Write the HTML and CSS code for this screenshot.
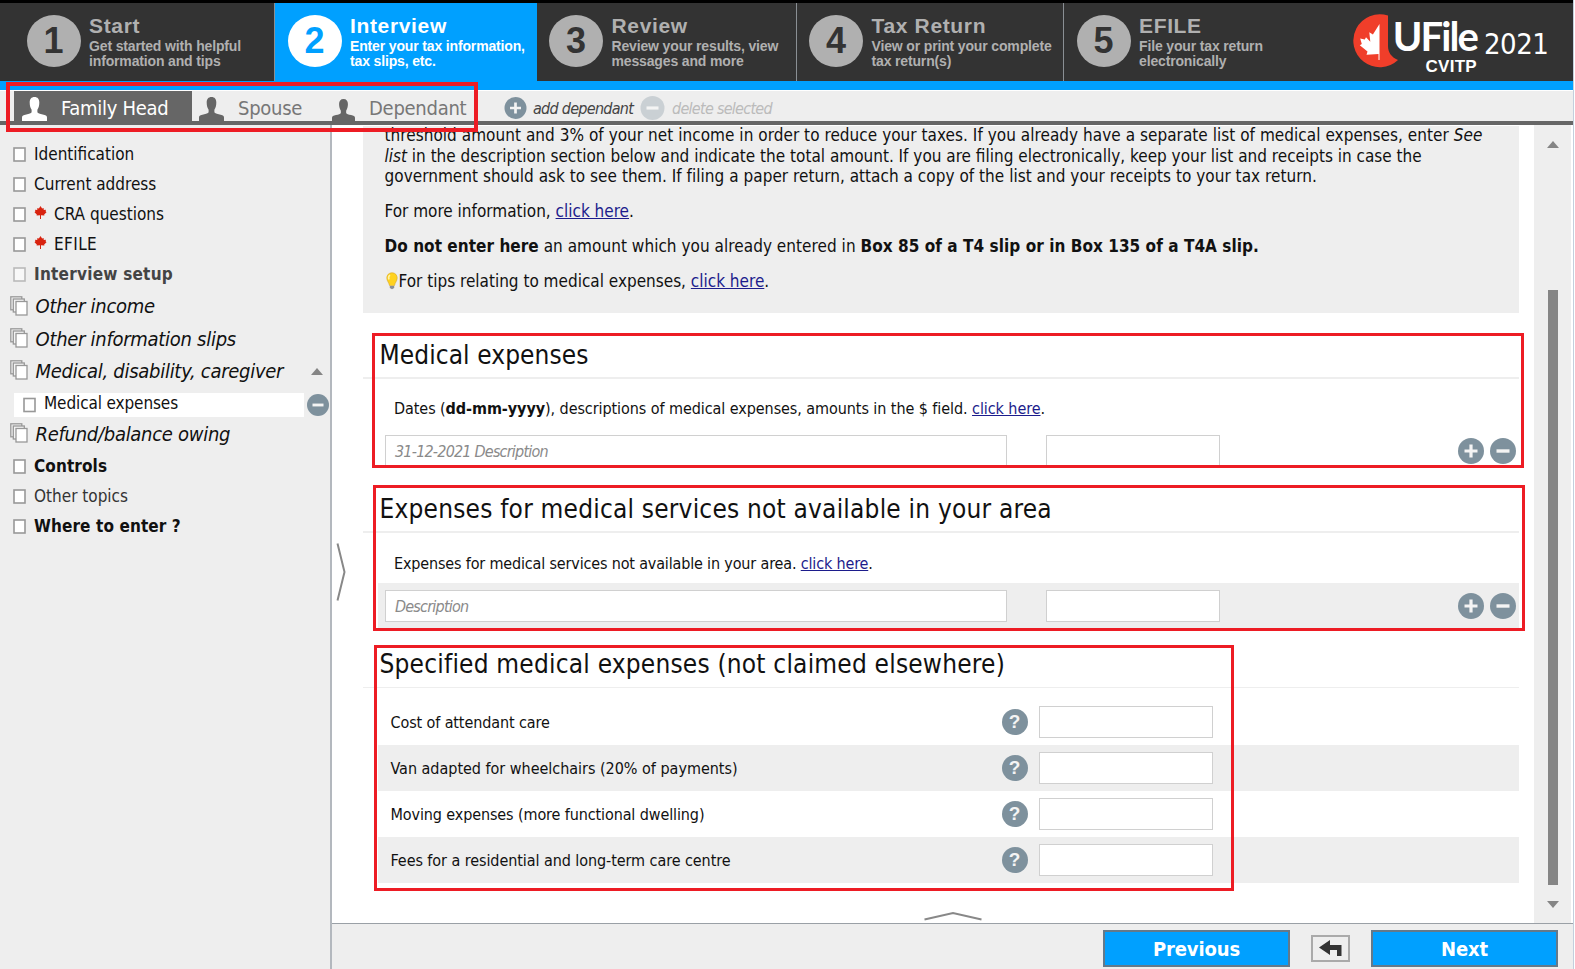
FILE: index.html
```html
<!DOCTYPE html>
<html lang="en">
<head>
<meta charset="utf-8">
<title>UFile 2021</title>
<link rel="stylesheet" href="styles.css">
</head>
<body>
<svg width="0" height="0" class="defs">
  <defs>
    <symbol id="plus" viewBox="0 0 26 26"><circle cx="13" cy="13" r="13"/><path d="M13 6.500v13M6.500 13h13" stroke="#f4f4f4" stroke-width="3.200" fill="none"/></symbol>
    <symbol id="minus" viewBox="0 0 26 26"><circle cx="13" cy="13" r="13"/><path d="M6.500 13h13" stroke="#f4f4f4" stroke-width="3.400" fill="none"/></symbol>
    <symbol id="person" viewBox="0 0 26 24" preserveAspectRatio="none"><path d="M13 0c3.300 0 5 2.200 5 5.500 0 3.200-.8 5.500-2 7.200v2.600c.6 1.200 2.500 1.700 5.500 2.200 3 .5 4.500 1.200 4.500 3V24H0v-3.500c0-1.800 1.500-2.500 4.500-3 3-.5 4.900-1 5.500-2.200v-2.600C8.800 11 8 8.700 8 5.500 8 2.200 9.700 0 13 0z"/></symbol>
    <symbol id="leaf" viewBox="0 0 12 13"><path d="M6 0l1.600 2.400 1.500-.5.200 2.100 2.200-.2-.4 1.500.9.900-2.300 2.200.2 1.100-3.400-.3V13h-1V9.200l-3.400.3.200-1.100L0 6.200l.9-.9L.5 3.800l2.200.2.200-2.100 1.500.5z"/></symbol>
    <symbol id="page" viewBox="0 0 13 15"><rect x="1" y="1" width="11" height="13" fill="#fff" stroke="#989898" stroke-width="1.600"/></symbol>
    <symbol id="pages" viewBox="0 0 18 20"><g fill="#f4f4f4" stroke="#989898" stroke-width="1.300"><rect x=".8" y=".8" width="11" height="13"/><rect x="3.300" y="3" width="11" height="13"/><rect x="6" y="5.500" width="11" height="13.500" fill="#fff"/></g></symbol>
  </defs>
</svg>
<div class="window">
  <header class="steps">
    <div class="step s1"><b class="num">1</b><div class="cap"><h2>Start</h2><p>Get started with helpful<br>information and tips</p></div></div>
    <div class="step s2 on"><b class="num">2</b><div class="cap"><h2>Interview</h2><p>Enter your tax information,<br>tax slips, etc.</p></div></div>
    <div class="step s3"><b class="num">3</b><div class="cap"><h2>Review</h2><p>Review your results, view<br>messages and more</p></div></div>
    <div class="step s4"><b class="num">4</b><div class="cap"><h2>Tax Return</h2><p>View or print your complete<br>tax return(s)</p></div></div>
    <div class="step s5"><b class="num">5</b><div class="cap"><h2>EFILE</h2><p>File your tax return<br>electronically</p></div></div>
    <div class="brand">
      <svg class="mark" width="46" height="54" viewBox="0 0 46 54"><path d="M35 1.500A26.500 26.500 0 1 0 45 46C38 43 35 38 35 32z" fill="#f03e2a"/><path d="M26.500 10v36h-1v-6l-12 .8 1-3.300-7.700-6.300 2-1.200-1.600-5.400 4.600.9 1.200-2.200 4.300 4.400-1-9.500 3.600 2.300z" fill="#fff"/></svg>
      <div class="wordmark"><span class="uf">UFile</span><span class="cv">CVITP</span></div>
      <span class="year">2021</span>
    </div>
  </header>
  <nav class="people">
    <div class="tab active"><svg width="25" height="24"><use href="#person"/></svg><span>Family Head</span></div>
    <div class="tab t2"><svg width="25" height="24"><use href="#person"/></svg><span>Spouse</span></div>
    <div class="tab t3"><svg width="23" height="22"><use href="#person"/></svg><span>Dependant</span></div>
    <div class="act add"><svg width="23" height="22"><use href="#plus"/></svg><i>add dependant</i></div>
    <div class="act del"><svg width="25" height="24"><use href="#minus"/></svg><i>delete selected</i></div>
  </nav>
  <div class="body">
    <aside class="side">
      <div class="it"><svg><use href="#page"/></svg><span>Identification</span></div>
      <div class="it"><svg><use href="#page"/></svg><span>Current address</span></div>
      <div class="it"><svg><use href="#page"/></svg><svg class="lf"><use href="#leaf"/></svg><span>CRA questions</span></div>
      <div class="it"><svg><use href="#page"/></svg><svg class="lf"><use href="#leaf"/></svg><span class="efile">EFILE</span></div>
      <div class="it bold dim"><svg><use href="#page"/></svg><span>Interview setup</span></div>
      <div class="grp g1"><svg><use href="#pages"/></svg><span>Other income</span></div>
      <div class="grp"><svg><use href="#pages"/></svg><span>Other information slips</span></div>
      <div class="grp"><svg><use href="#pages"/></svg><span>Medical, disability, caregiver</span><b class="up"></b></div>
      <div class="subrow"><div class="sub"><svg><use href="#page"/></svg><span>Medical expenses</span></div><svg class="mn"><use href="#minus"/></svg></div>
      <div class="grp"><svg><use href="#pages"/></svg><span>Refund/balance owing</span></div>
      <div class="it bold"><svg><use href="#page"/></svg><span>Controls</span></div>
      <div class="it soft"><svg><use href="#page"/></svg><span>Other topics</span></div>
      <div class="it bold"><svg><use href="#page"/></svg><span>Where to enter ?</span></div>
    </aside>
    <div class="gutter"><svg width="10" height="60" viewBox="0 0 10 60"><path d="M1.500 1.500l7 28.500-7 28.500" fill="none" stroke="#888" stroke-width="2"/></svg></div>
    <div class="right">
      <div class="view">
        <main class="main">
          <div class="intro">
            <p class="first"><span class="l1">threshold amount and 3% of your net income in order to reduce your taxes. If you already have a separate list of medical expenses, enter <i>See</i></span><br><span><i>list</i> in the description section below and indicate the total amount. If you are filing electronically, keep your list and receipts in case the</span><br><span class="l3">government should ask to see them. If filing a paper return, attach a copy of the list and your receipts to your tax return.</span></p>
            <p><span>For more information, <a>click here</a>.</span></p>
            <p><span class="l1"><b>Do not enter here</b> an amount which you already entered in <b>Box 85 of a T4 slip or in Box 135 of a T4A slip.</b></span></p>
            <p><svg class="bulb" width="14" height="18" viewBox="0 0 14 18"><path d="M7 .8c3.400 0 5.200 2.500 5.200 5.200 0 3-2.200 4.500-2.700 7.500h-5C4 10.500 1.800 9 1.800 6 1.800 3.300 3.600.8 7 .8z" fill="#ffd21f" stroke="#d6a62e" stroke-width=".6"/><path d="M5 3.200C3.500 4.200 3.400 6 4 7.500" stroke="#fff3a8" stroke-width="1.600" fill="none"/><path d="M4.800 14h4.400v2L7 17.200 4.800 16z" fill="#8a8f96"/></svg><span>For tips relating to medical expenses, <a>click here</a>.</span></p>
          </div>
          <section class="sec">
            <h1 class="h-med">Medical expenses</h1>
            <p class="lead lead-dates">Dates (<b>dd-mm-yyyy</b>), descriptions of medical expenses, amounts in the $ field. <a>click here</a>.</p>
            <div class="entry"><div class="field wide"><i>31-12-2021 Description</i></div><div class="field"></div><svg class="pm p"><use href="#plus"/></svg><svg class="pm"><use href="#minus"/></svg></div>
          </section>
          <section class="sec">
            <h1>Expenses for medical services not available in your area</h1>
            <p class="lead">Expenses for medical services not available in your area. <a>click here</a>.</p>
            <div class="entry shade"><div class="field wide"><i>Description</i></div><div class="field"></div><svg class="pm p"><use href="#plus"/></svg><svg class="pm"><use href="#minus"/></svg></div>
          </section>
          <section class="sec last">
            <h1>Specified medical expenses (not claimed elsewhere)</h1>
            <div class="q"><label>Cost of attendant care</label><b class="help">?</b><div class="field"></div></div>
            <div class="q shade"><label class="van">Van adapted for wheelchairs (20% of payments)</label><b class="help">?</b><div class="field"></div></div>
            <div class="q"><label>Moving expenses (more functional dwelling)</label><b class="help">?</b><div class="field"></div></div>
            <div class="q shade"><label class="fees">Fees for a residential and long-term care centre</label><b class="help">?</b><div class="field"></div></div>
          </section>
          <svg class="peak" width="60" height="10" viewBox="0 0 60 10"><path d="M1.500 8.500L30 2l28.500 6.500" fill="none" stroke="#888" stroke-width="2"/></svg>
        </main>
        <div class="scroll"><b class="up"></b><div class="thumb"></div><b class="down"></b></div>
      </div>
      <footer class="foot">
        <div class="btn">Previous</div>
        <div class="back"><svg width="24" height="17" viewBox="0 0 24 17"><path d="M0 7.500L11 0v5h11.500v11h-4.500v-6h-7v5z" fill="#333"/></svg></div>
        <div class="btn">Next</div>
      </footer>
    </div>
  </div>
</div>
<div class="mk m1"></div><div class="mk m2"></div><div class="mk m3"></div><div class="mk m4"></div>
</body>
</html>
```
FILE: styles.css
```css
* { box-sizing: border-box; margin: 0; padding: 0; }
body { width: 1575px; height: 969px; overflow: hidden; background: #fff; color: #111; font: 17px "DejaVu Sans Condensed", "DejaVu Sans", sans-serif; font-stretch: condensed; }
.defs { position: absolute; }
svg { flex: none; display: block; }
h1, h2 { font-weight: normal; }
a { color: #1c1c8c; text-decoration: underline; }
.window { width: 1574px; height: 969px; display: flex; flex-direction: column; border-right: 1px solid #c3cfdd; background: #eee; }

/* step header */
.steps { height: 90px; flex: none; display: flex; width: 1573px; background: #333; border-top: 3px solid #000; border-bottom: 9px solid #00a0ff; color: #b0b0b0; font-family: "Liberation Sans", Arial, sans-serif; }
.step { display: flex; padding-top: 12px; border-right: 1px solid #8a8f94; white-space: nowrap; }
.step.on { background: #00a0ff; color: #fff; border-right-color: #00a0ff; }
.s1 { width: 275px; padding-left: 26.500px; }
.s2 { width: 262px; padding-left: 12.500px; }
.s3 { width: 260px; padding-left: 12px; }
.s4 { width: 267px; padding-left: 12px; }
.s5 { width: 280px; padding-left: 12.500px; border: 0; }
.num { width: 54px; height: 52px; border-radius: 50%; background: #b0b0b0; color: #333; font-size: 36px; line-height: 51px; text-align: center; flex: none; }
.on .num { background: #fff; color: #00a0ff; }
.cap { padding-left: 8.500px; }
.cap h2 { font-size: 21px; font-weight: bold; line-height: 21px; letter-spacing: .65px; }
.cap p { font-size: 14px; font-weight: bold; line-height: 15px; padding-top: 3px; letter-spacing: -.15px; }
.brand { display: flex; padding: 11px 0 0 9px; color: #fff; }
.wordmark { width: 84px; margin-left: -6px; display: flex; flex-direction: column; align-items: flex-end; white-space: nowrap; }
.uf { font: bold 40px/44px Lato, sans-serif; letter-spacing: -1.900px; }
.cv { font: bold 17px/12px "Liberation Sans", sans-serif; letter-spacing: .3px; padding-top: 3px; }
.year { font: 29px/34px "DejaVu Sans Condensed", sans-serif; letter-spacing: -.5px; padding: 13px 0 0 7px; }

/* family member tabs */
.people { height: 35px; flex: none; display: flex; width: 1573px; background: #eee; border-bottom: 4px solid #666; border-top: 1px solid #fff; padding-left: 14px; }
.tab { display: flex; align-items: flex-end; font-size: 20px; line-height: 26px; letter-spacing: -.27px; color: #777; white-space: nowrap; }
.tab svg { fill: #666; }
.tab.active { width: 178px; padding-left: 8px; gap: 14px; background: #666; color: #fff; }
.tab.active svg { fill: #fff; }
.t2 { width: 140px; padding-left: 7px; gap: 14px; }
.t3 { width: 172px; gap: 14px; }
.act { display: flex; align-items: center; white-space: nowrap; color: #444; font-size: 16px; letter-spacing: -.72px; padding-top: 4px; }
.act svg { fill: #7e919d; }
.add { width: 136px; gap: 6px; }
.del { gap: 7px; color: #bbb; }
.del svg { fill: #cad0d4; }

/* navigation */
.body { flex: 1; display: flex; min-height: 0; width: 1573px; background: #fff; }
.side { width: 332px; flex: none; background: #eee; border-right: 2px solid #b3b8be; padding-top: 14px; }
.it { height: 30px; line-height: 30px; display: flex; align-items: center; padding-left: 13px; white-space: nowrap; }
.it svg { width: 13px; height: 15px; margin: 1px 8px 0 0; }
.it svg.lf { width: 13px; height: 13px; margin: -3px 7px 0 0; fill: #d8230f; }
.efile { letter-spacing: .4px; }
.bold { font-weight: bold; letter-spacing: .1px; }
.dim { color: #444; letter-spacing: .23px; }
.dim svg { opacity: .6; }
.soft { color: #333; }
.grp { height: 32.400px; line-height: 31.600px; display: flex; align-items: center; font-size: 20px; font-style: italic; letter-spacing: -.28px; padding-left: 10px; white-space: nowrap; }
.grp svg { width: 18px; height: 20px; margin: -3px 7.500px 0 0; }
.g1 { margin-top: 2px; }
.up, .down { width: 0; height: 0; border: 6px solid transparent; }
.up { border-top: 0; border-bottom: 7px solid #858585; }
.down { border-bottom: 0; border-top: 7px solid #858585; }
.grp .up { margin-left: auto; margin-right: 7px; }
.subrow { display: flex; padding: 5px 1px 1px 14px; justify-content: space-between; align-items: center; }
.sub { width: 290px; height: 24px; line-height: 20px; background: #fff; display: flex; padding-left: 9px; letter-spacing: -.11px; white-space: nowrap; }
.sub svg { width: 13px; height: 16px; margin: 4px 8px 0 0; }
.mn { width: 22px; height: 22px; fill: #7e919d; }
.gutter { width: 31px; flex: none; padding: 417px 0 0 4px; }

/* form */
.right { flex: 1; display: flex; flex-direction: column; min-width: 0; margin-left: -31px; }
.view { flex: 1; display: flex; min-height: 0; padding-left: 31px; }
.main { width: 1156px; padding-top: 1px; overflow: hidden; flex: none; }
.intro { height: 186.500px; background: #eee; padding-left: 21.500px; white-space: nowrap; overflow: hidden; }
.intro p { line-height: 20.600px; margin-bottom: 14.400px; display: flex; }
.intro .first { display: block; margin-top: -1px; }
.l1 { letter-spacing: .04px; }
.l3 { letter-spacing: .03px; }
.bulb { margin: 1px 0 0 0; }
.sec { padding-top: 17.600px; }
.intro + .sec { padding-top: 24.200px; }
.sec h1 { font-size: 26px; line-height: 37px; letter-spacing: .2px; padding: 0 0 3px 16.500px; border-bottom: 2px solid #eee; white-space: nowrap; }
.sec .h-med { letter-spacing: .08px; }
.lead { font-size: 16px; line-height: 24px; letter-spacing: -.16px; padding: 18.500px 0 7px 31px; white-space: nowrap; }
.lead-dates { letter-spacing: -.07px; }
.entry { height: 45.500px; margin-left: 15px; padding: 0 3px 0 7px; display: flex; align-items: center; }
.shade { background: #eee; }
.field { width: 174px; height: 32px; border: 1px solid #d0d0d0; background: #fff; flex: none; }
.field.wide { width: 622px; margin-right: 39px; font-size: 16px; line-height: 31px; letter-spacing: -.79px; color: #8a8a8a; padding-left: 9px; white-space: nowrap; }
.pm { width: 26px; height: 26px; fill: #7e919d; }
.pm.p { margin: 0 6px 0 auto; }
.last { padding-top: 18px; }
.last h1 { border-bottom-width: 1px; padding-bottom: 4px; margin-bottom: 10.500px; }
.q { height: 46px; margin-left: 15px; display: flex; align-items: center; padding-left: 12.500px; font-size: 16px; letter-spacing: -.11px; }
.q label { width: 611px; padding-top: 2px; white-space: nowrap; }
.q .van { letter-spacing: -.02px; }
.q .fees { letter-spacing: -.07px; }
.help { width: 26px; height: 26px; border-radius: 50%; background: #7e919d; color: #f4f4f4; font: bold 19px/26px "Liberation Sans", sans-serif; text-align: center; margin-right: 11px; }
.peak { margin: 28px 0 0 560px; }
.scroll { width: 37px; margin-left: 15px; background: #eee; display: flex; flex-direction: column; align-items: center; padding: 16px 0 15px; }
.thumb { width: 10px; height: 595px; margin: auto 0 16px; background: #858585; }
.foot { height: 46px; flex: none; border-top: 1.500px solid #9aa0a6; background: #eee; display: flex; justify-content: flex-end; padding: 6px 15px 0 0; }
.btn { width: 187px; height: 37px; border: 2px solid #63798a; background: #00a0ff; color: #fff; font-weight: bold; font-size: 20px; line-height: 34px; letter-spacing: -.1px; text-align: center; }
.back { width: 39px; height: 27px; margin: 5px 21px 0; border: 2px solid #aaa; display: flex; align-items: center; justify-content: center; }

/* highlight frames over the form */
.mk { position: absolute; border: 3px solid #ed1c24; }
.m1 { left: 6px; top: 82px; width: 472px; height: 50px; border-width: 4px; }
.m2 { left: 372px; top: 333px; width: 1152px; height: 135px; }
.m3 { left: 373px; top: 485px; width: 1152px; height: 146px; }
.m4 { left: 374px; top: 645px; width: 860px; height: 246px; }
```
